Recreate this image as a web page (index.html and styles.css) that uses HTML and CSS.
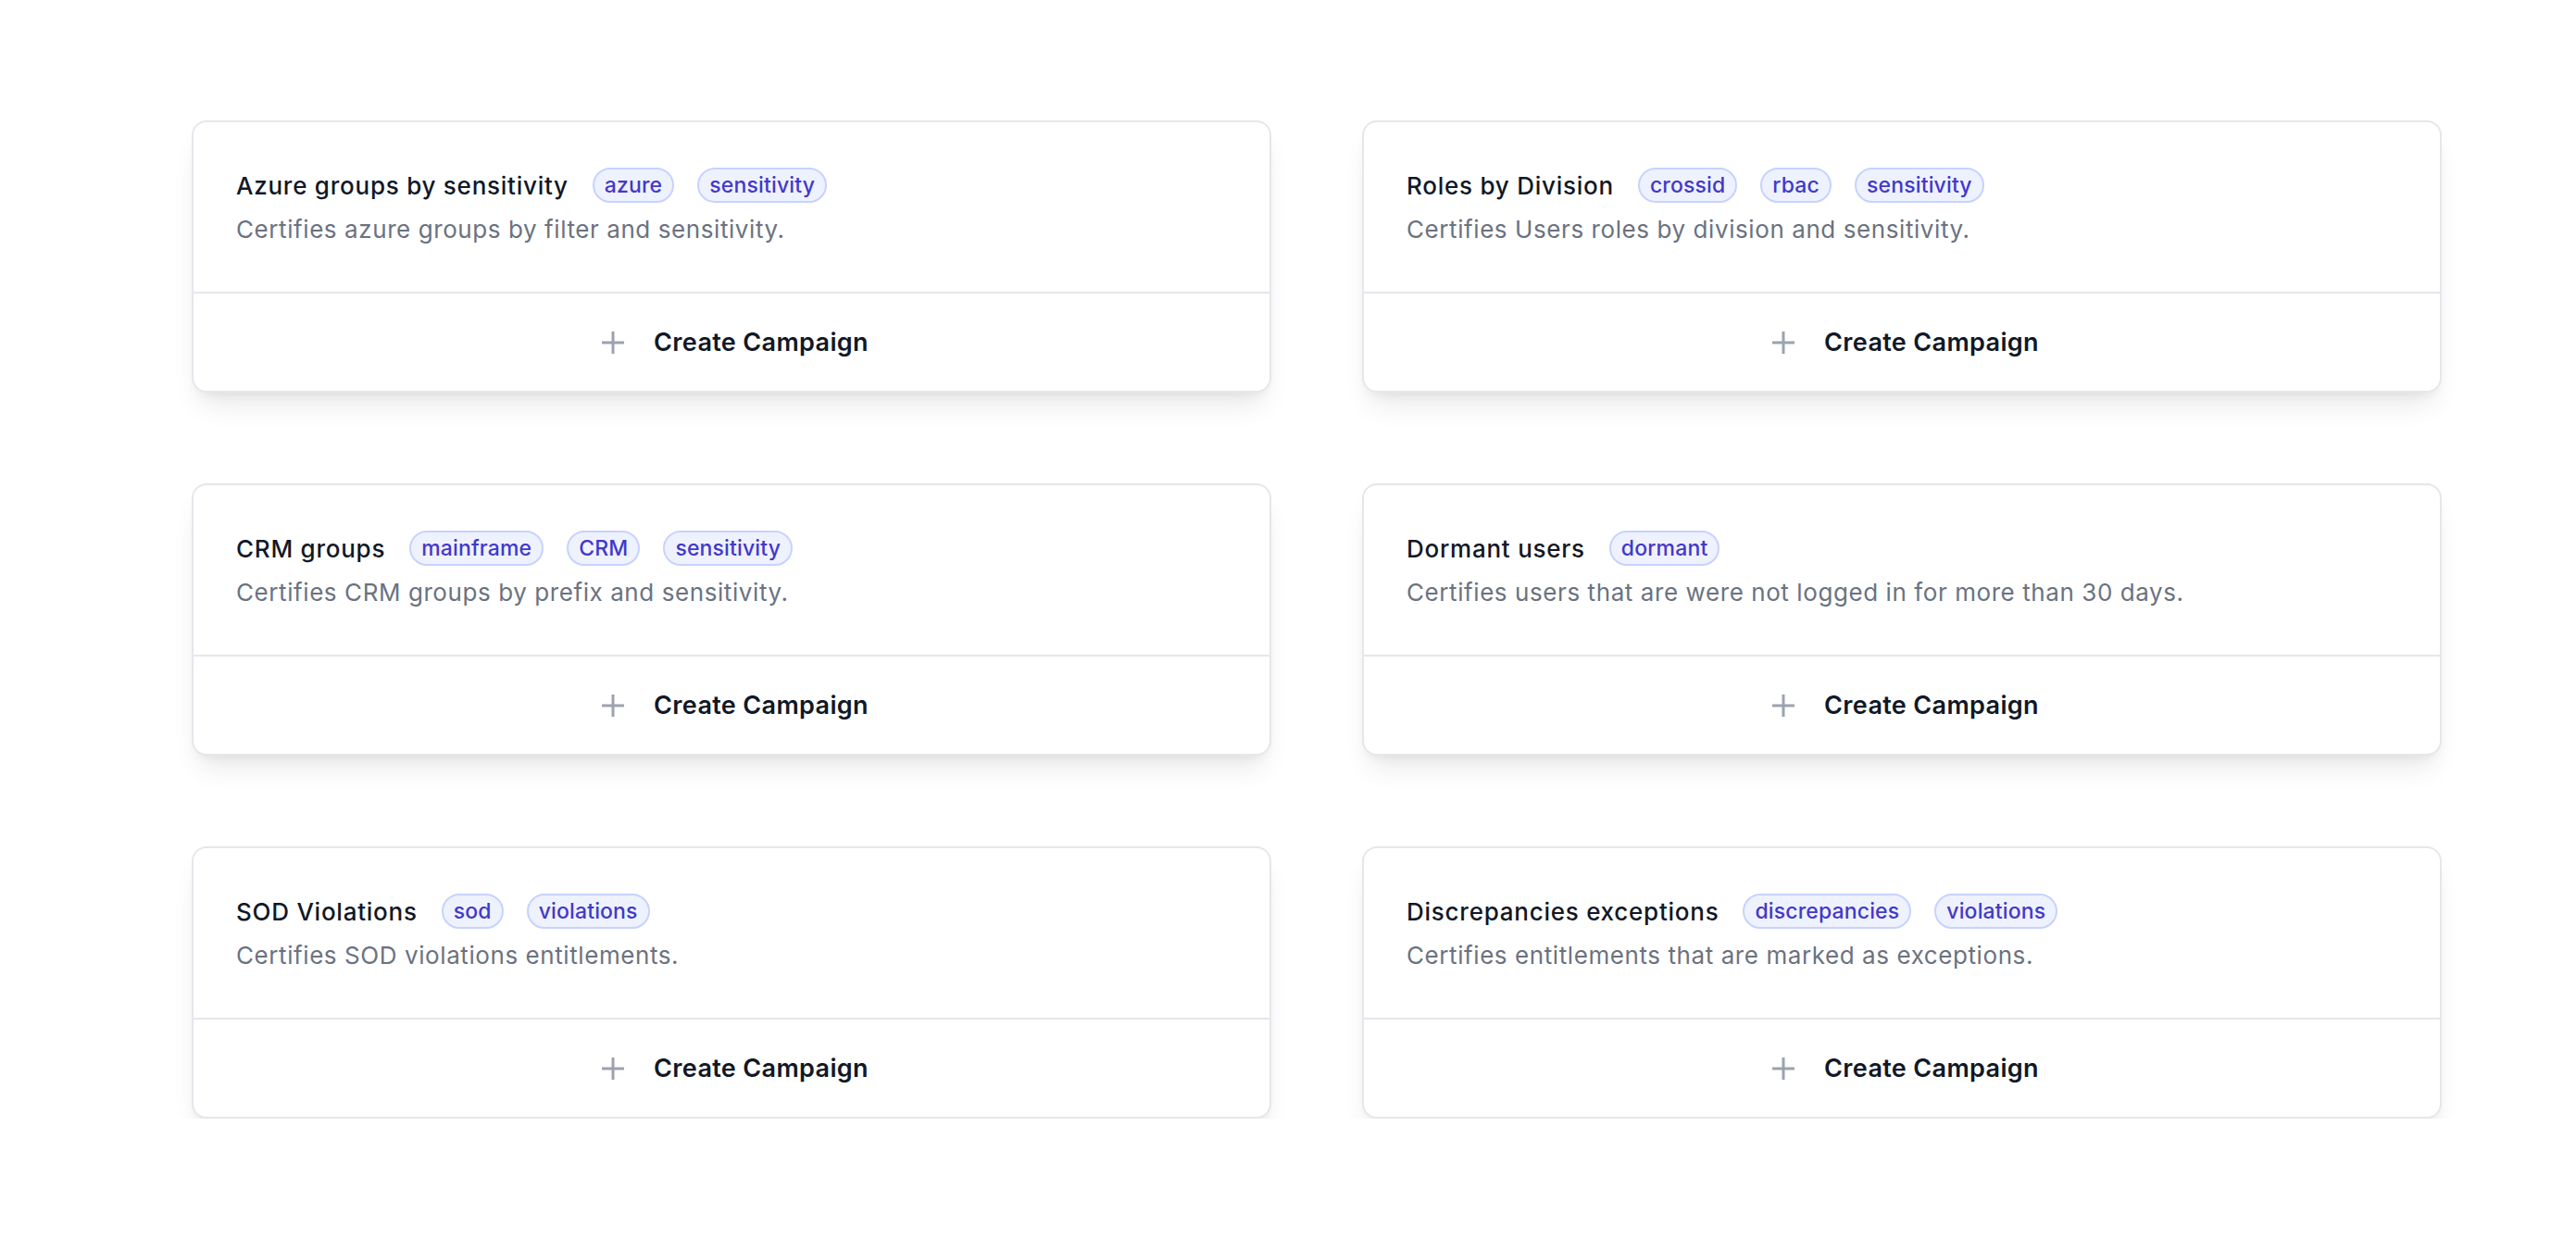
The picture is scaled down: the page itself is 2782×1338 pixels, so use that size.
FILE: index.html
```html
<!DOCTYPE html>
<html lang="en">
<head>
<meta charset="utf-8">
<title>Campaign templates</title>
<link rel="stylesheet" href="styles.css">
</head>
<body>
<main class="page">
  <div class="grid">
    <section class="card">
      <div class="card-body">
        <div class="title-row">
          <h3 class="title">Azure groups by sensitivity</h3>
          <span class="tag">azure</span>
          <span class="tag">sensitivity</span>
        </div>
        <p class="desc">Certifies azure groups by filter and sensitivity.</p>
      </div>
      <button class="card-action" type="button">
        <svg class="plus" viewBox="0 0 24 24" aria-hidden="true"><path d="M12 0v24M0 12h24"/></svg>
        <span>Create Campaign</span>
      </button>
    </section>
    <section class="card">
      <div class="card-body">
        <div class="title-row">
          <h3 class="title">Roles by Division</h3>
          <span class="tag">crossid</span>
          <span class="tag">rbac</span>
          <span class="tag">sensitivity</span>
        </div>
        <p class="desc">Certifies Users roles by division and sensitivity.</p>
      </div>
      <button class="card-action" type="button">
        <svg class="plus" viewBox="0 0 24 24" aria-hidden="true"><path d="M12 0v24M0 12h24"/></svg>
        <span>Create Campaign</span>
      </button>
    </section>
    <section class="card">
      <div class="card-body">
        <div class="title-row">
          <h3 class="title">CRM groups</h3>
          <span class="tag">mainframe</span>
          <span class="tag">CRM</span>
          <span class="tag">sensitivity</span>
        </div>
        <p class="desc">Certifies CRM groups by prefix and sensitivity.</p>
      </div>
      <button class="card-action" type="button">
        <svg class="plus" viewBox="0 0 24 24" aria-hidden="true"><path d="M12 0v24M0 12h24"/></svg>
        <span>Create Campaign</span>
      </button>
    </section>
    <section class="card">
      <div class="card-body">
        <div class="title-row">
          <h3 class="title">Dormant users</h3>
          <span class="tag">dormant</span>
        </div>
        <p class="desc">Certifies users that are were not logged in for more than 30 days.</p>
      </div>
      <button class="card-action" type="button">
        <svg class="plus" viewBox="0 0 24 24" aria-hidden="true"><path d="M12 0v24M0 12h24"/></svg>
        <span>Create Campaign</span>
      </button>
    </section>
    <section class="card">
      <div class="card-body">
        <div class="title-row">
          <h3 class="title">SOD Violations</h3>
          <span class="tag">sod</span>
          <span class="tag">violations</span>
        </div>
        <p class="desc">Certifies SOD violations entitlements.</p>
      </div>
      <button class="card-action" type="button">
        <svg class="plus" viewBox="0 0 24 24" aria-hidden="true"><path d="M12 0v24M0 12h24"/></svg>
        <span>Create Campaign</span>
      </button>
    </section>
    <section class="card">
      <div class="card-body">
        <div class="title-row">
          <h3 class="title">Discrepancies exceptions</h3>
          <span class="tag">discrepancies</span>
          <span class="tag">violations</span>
        </div>
        <p class="desc">Certifies entitlements that are marked as exceptions.</p>
      </div>
      <button class="card-action" type="button">
        <svg class="plus" viewBox="0 0 24 24" aria-hidden="true"><path d="M12 0v24M0 12h24"/></svg>
        <span>Create Campaign</span>
      </button>
    </section>
  </div>
</main>
</body>
</html>
```

FILE: styles.css
```css
* { box-sizing: border-box; }

html, body {
  margin: 0;
  padding: 0;
  background: #ffffff;
}

body {
  font-family: Inter, "Noto Sans", "Liberation Sans", sans-serif;
  color: #111827;
  -webkit-font-smoothing: antialiased;
}

.page {
  padding: 130px 0 0 207px;
}

.grid {
  display: grid;
  grid-template-columns: 1166px 1166px;
  column-gap: 98px;
  row-gap: 98px;
}

.card {
  display: flex;
  flex-direction: column;
  height: 294px;
  background: #ffffff;
  border: 2px solid #e5e7eb;
  border-radius: 16px;
  box-shadow: 0 20px 30px -8px rgba(0, 0, 0, 0.09), 0 8px 14px -8px rgba(0, 0, 0, 0.09);
  overflow: hidden;
}

.card-body {
  padding: 48px 48px 0 46px;
  height: 185px;
  border-bottom: 2px solid #e5e7eb;
}

.title-row {
  display: flex;
  align-items: center;
  gap: 25px;
  height: 40px;
}

.title {
  margin: 0 1px 0 0;
  font-size: 26px;
  font-weight: 500;
  color: #111827;
  letter-spacing: 0.75px;
}

.tag {
  display: inline-flex;
  align-items: center;
  height: 38px;
  padding: 0 11px;
  border: 2px solid #c7d2fe;
  border-radius: 999px;
  background: #eef2ff;
  color: #4338ca;
  font-size: 23px;
  font-weight: 500;
  letter-spacing: 0.15px;
}

.desc {
  margin: 8px 0 0;
  font-size: 26px;
  line-height: 40px;
  color: #6b7280;
  letter-spacing: 0.58px;
}

.card-action {
  flex: 1;
  display: flex;
  align-items: center;
  justify-content: center;
  gap: 32px;
  padding: 0 0 0 8px;
  border: 0;
  background: transparent;
  font-family: inherit;
  font-size: 27px;
  font-weight: 600;
  color: #111827;
  letter-spacing: 0.35px;
  cursor: pointer;
}

.plus {
  width: 24px;
  height: 24px;
  fill: none;
  stroke: #9ca3af;
  stroke-width: 3;
}
```
